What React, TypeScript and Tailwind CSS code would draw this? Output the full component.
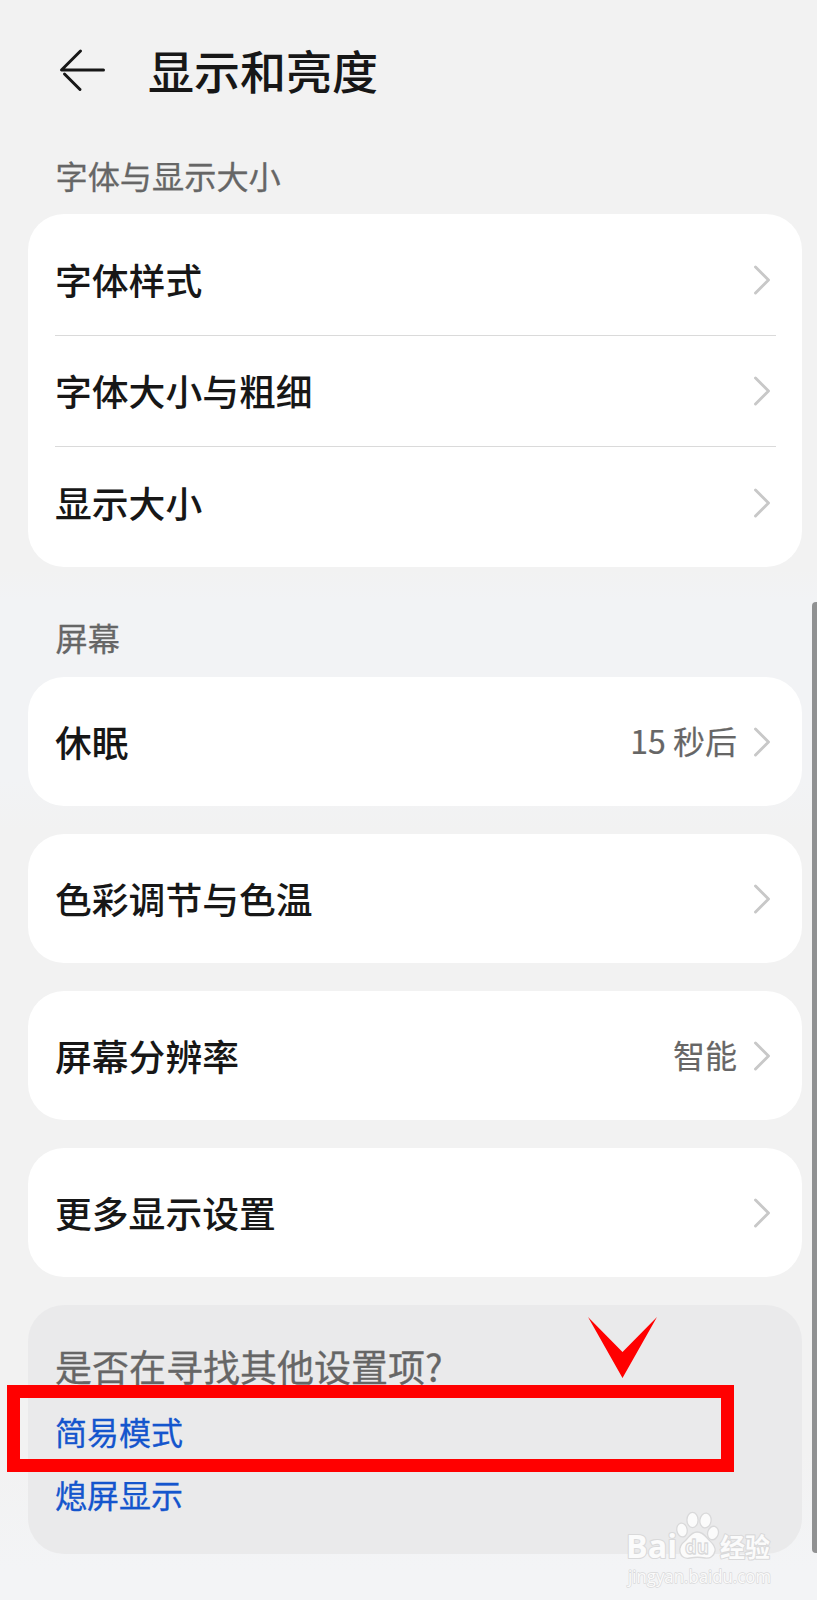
interface RowProps {
  label: string
  value?: string
}

function ChevronIcon() {
  return (
    <svg className="ml-4 h-8 w-5 shrink-0" viewBox="0 0 20 32" fill="none">
      <path d="M2.5 3L15.5 16L2.5 29" stroke="#c8c8c8" strokeWidth="2.9" strokeLinecap="round" strokeLinejoin="round" />
    </svg>
  )
}

function Row({ label, value }: RowProps) {
  return (
    <div className="flex h-[111px] items-center justify-between">
      <span className="pb-px text-[36.8px] leading-none font-medium text-[#171717]">{label}</span>
      <div className="flex items-center">
        {value && <span className="pb-[3px] text-[32px] leading-none text-[#666666] [-webkit-text-stroke:0.2px]">{value}</span>}
        <ChevronIcon />
      </div>
    </div>
  )
}

function SectionTitle({ children }: { children: string }) {
  return (
    <h2 className="pl-7 text-[32.2px] leading-8 font-normal text-[#666666] [-webkit-text-stroke:0.3px]">{children}</h2>
  )
}

function SingleCard({ label, value }: RowProps) {
  return (
    <div className="flex h-[129px] flex-col justify-center rounded-[36px] bg-white pr-[29px] pl-[27.5px]">
      <Row label={label} value={value} />
    </div>
  )
}

function Watermark() {
  return (
    <svg
      className="absolute top-[1508px] left-[622px] h-20 w-[156px]"
      viewBox="0 0 156 80"
      fill="#fbfbfb"
      stroke="#d9d9da"
      strokeWidth="1.3"
      strokeLinejoin="round"
    >
      <g fontFamily="'Open Sans', sans-serif" paintOrder="stroke" strokeWidth="2.2">
        <text x="4" y="50" fontSize="33" fontWeight="700" textLength="51" lengthAdjust="spacingAndGlyphs">Bai</text>
        <text x="98" y="48.5" fontSize="26" fontWeight="700" fontFamily="'Noto Sans CJK SC', sans-serif" textLength="50" lengthAdjust="spacingAndGlyphs">经验</text>
        <text x="6" y="75" fontSize="17.5" strokeWidth="1.4" textLength="143" lengthAdjust="spacingAndGlyphs">jingyan.baidu.com</text>
      </g>
      <ellipse cx="60" cy="22" rx="5.2" ry="7" transform="rotate(-10 60 22)" />
      <ellipse cx="70.5" cy="12" rx="5.6" ry="7.6" />
      <ellipse cx="83.5" cy="12.5" rx="5.6" ry="7.4" transform="rotate(8 83.5 12.5)" />
      <ellipse cx="91" cy="25" rx="5.4" ry="6.8" transform="rotate(15 91 25)" />
      <path d="M75 24C69 24 67 29 63 33C59 36 57 39 58 44C59 49 63 51 68 50C73 49 78 49 83 50C88 51 92 48 93 43C94 38 90 35 87 32C83 28 81 24 75 24Z" />
      <text x="63" y="46" fontSize="20" fontWeight="700" fontFamily="'Open Sans', sans-serif" textLength="24" lengthAdjust="spacingAndGlyphs">du</text>
    </svg>
  )
}

export default function App() {
  return (
    <div className="relative h-[1600px] w-[817px] overflow-hidden bg-[linear-gradient(#f2f2f2_570px,#f2f3f5_600px,#f2f3f5_780px,#f2f2f2_830px,#f2f2f2_1450px,#f3f4f6_1570px)] font-['Noto_Sans_CJK_SC',sans-serif]">
      {/* Header */}
      <header className="flex h-[142px] items-center pl-[58px]">
        <svg className="mt-[-3px] h-12 w-[50px]" viewBox="0 0 50 48" fill="none" stroke="#171717" strokeWidth="3" strokeLinecap="round">
          <path d="M22.5 5L3.5 24H45.5" strokeLinejoin="round" />
          <path d="M6.5 28L22 43.5" />
        </svg>
        <h1 className="ml-10 pb-[5px] text-[46px] leading-none font-medium text-[#171717]">显示和亮度</h1>
      </header>

      <main className="pr-[15px] pl-[27.5px]">
        {/* Font and display size */}
        <div className="pt-[17px]">
          <SectionTitle>字体与显示大小</SectionTitle>
        </div>
        <div className="mt-[23px] h-[353px] rounded-[36px] bg-white pt-[11px] pr-[26px] pl-[27.5px]">
          <div className="divide-y divide-[#dadada] [&>div]:pr-[3px]">
            <Row label="字体样式" />
            <Row label="字体大小与粗细" />
            <Row label="显示大小" />
          </div>
        </div>

        {/* Screen */}
        <div className="mt-[54px]">
          <SectionTitle>屏幕</SectionTitle>
        </div>
        <div className="mt-6 flex flex-col gap-7">
          <SingleCard label="休眠" value="15 秒后" />
          <SingleCard label="色彩调节与色温" />
          <SingleCard label="屏幕分辨率" value="智能" />
          <SingleCard label="更多显示设置" />
        </div>

        {/* Related settings */}
        <div className="mt-7 h-[249px] rounded-[36px] bg-[#eaeaeb] pt-[42px] pl-[27.5px] [-webkit-text-stroke:0.3px]">
          <p className="text-[37px] leading-[38px] text-[#666666]">是否在寻找其他设置项?</p>
          <a className="mt-[30px] block text-[32px] leading-8 text-[#1455cd]">简易模式</a>
          <a className="mt-[31px] block text-[32px] leading-8 text-[#1455cd]">熄屏显示</a>
        </div>
      </main>

      {/* Scrollbar */}
      <div className="absolute top-[602px] -right-1 h-[951px] w-[9px] rounded-[4px] bg-[#909192]" />

      {/* Highlight */}
      <svg className="absolute top-[1317px] left-[587.5px] h-[61px] w-[69px]" viewBox="0 0 70 61" preserveAspectRatio="none" fill="#ff0000">
        <path d="M0 0L35 35L70 0L35 61Z" />
      </svg>
      <div className="absolute top-[1384.5px] left-[6.5px] h-[87.5px] w-[727px] border-[13px] border-[#ff0000]" />

      <Watermark />
    </div>
  )
}
